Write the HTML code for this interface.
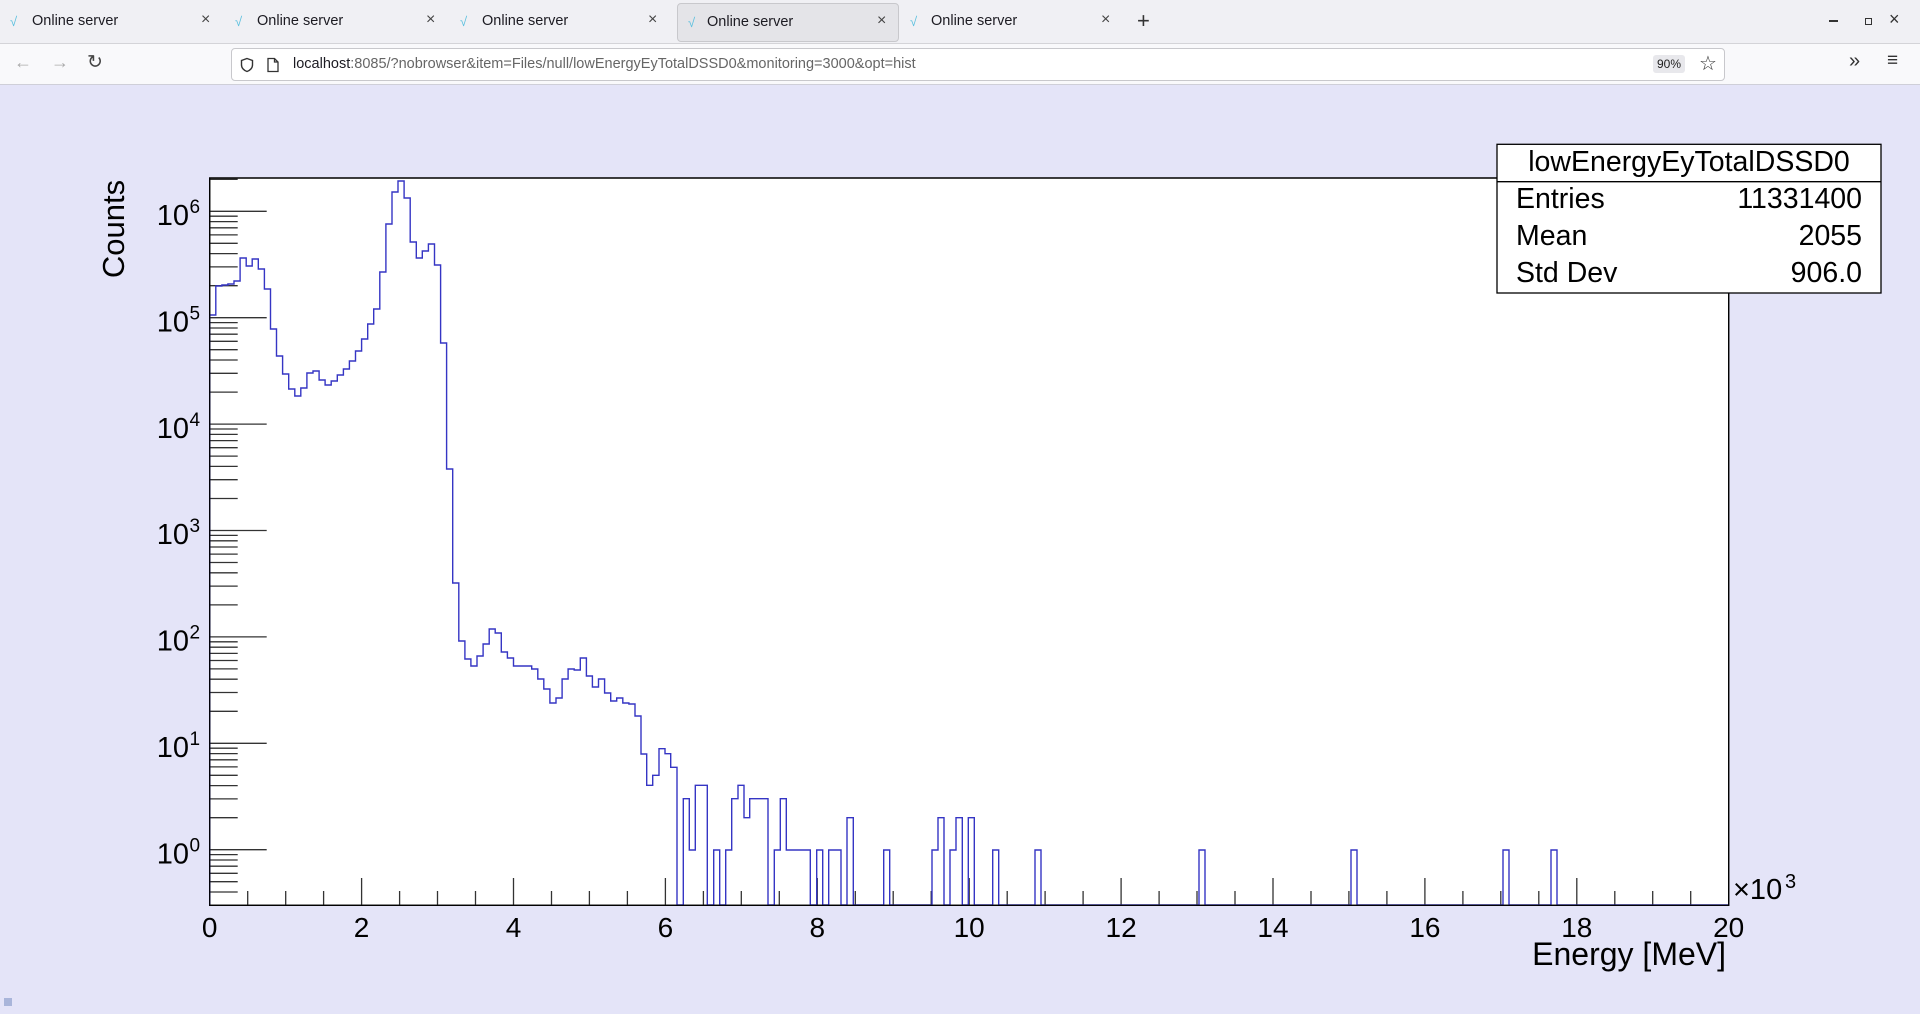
<!DOCTYPE html>
<html><head><meta charset="utf-8">
<style>
html,body{margin:0;padding:0;width:1920px;height:1014px;overflow:hidden;background:#e4e4f8;font-family:"Liberation Sans",sans-serif;}
#tabs{position:absolute;left:0;top:0;width:1920px;height:43px;background:#f0f0f4;border-bottom:1px solid #d4d4d8;}
.tab{position:absolute;top:3px;height:37px;width:220px;font-size:14.5px;color:#1c1b22;}
.tab .ic{position:absolute;left:10px;top:11px;font-size:13px;color:#5bc0de;}
.tab .t{position:absolute;left:22px;top:10px;}
.tab .x{position:absolute;top:8px;font-size:16px;color:#444;}
.tab.act{background:#e4e4e8;border:1px solid #c8c8cc;border-radius:4px;}
#nav{position:absolute;left:0;top:44px;width:1920px;height:40px;background:#f9f9fb;border-bottom:1px solid #cfcfd8;}
#url{position:absolute;left:231px;top:4px;width:1492px;height:31px;background:#fff;border:1px solid #c8c8cc;border-radius:4px;font-size:14.5px;}
.g{color:#666;}
</style></head><body>
<div id="tabs">
 <div class="tab" style="left:0"><span class="ic">√</span><span class="t" style="left:32px">Online server</span><span class="x" style="left:201px">×</span></div>
 <div class="tab" style="left:225px"><span class="ic">√</span><span class="t" style="left:32px">Online server</span><span class="x" style="left:201px">×</span></div>
 <div class="tab" style="left:450px"><span class="ic">√</span><span class="t" style="left:32px">Online server</span><span class="x" style="left:198px">×</span></div>
 <div class="tab act" style="left:677px;width:220px"><span class="ic">√</span><span class="t" style="left:29px">Online server</span><span class="x" style="left:199px">×</span></div>
 <div class="tab" style="left:900px"><span class="ic">√</span><span class="t" style="left:31px">Online server</span><span class="x" style="left:201px">×</span></div>
 <div style="position:absolute;left:1137px;top:8px;font-size:22px;color:#333">+</div>
 <div style="position:absolute;left:1829px;top:20px;width:9px;height:1.5px;background:#333"></div>
 <div style="position:absolute;left:1865px;top:18px;width:5px;height:5px;border:1.5px solid #333"></div>
 <div style="position:absolute;left:1889px;top:9px;font-size:18px;color:#333">×</div>
</div>
<div id="nav">
 <div style="position:absolute;left:14px;top:8px;font-size:18px;color:#aaa">←</div>
 <div style="position:absolute;left:51px;top:8px;font-size:18px;color:#aaa">→</div>
 <div style="position:absolute;left:87px;top:7px;font-size:19px;color:#444">↻</div>
 <div id="url">
  <svg style="position:absolute;left:7px;top:8px" width="16" height="16" viewBox="0 0 16 16"><path d="M8 1.5 L13.5 3.5 V8 C13.5 11 11 13.5 8 14.5 C5 13.5 2.5 11 2.5 8 V3.5 Z" fill="none" stroke="#333" stroke-width="1.4"/></svg>
  <svg style="position:absolute;left:34px;top:8px" width="14" height="16" viewBox="0 0 14 16"><path d="M2 1.5 H8.5 L12 5 V14.5 H2 Z M8.5 1.5 V5 H12" fill="none" stroke="#333" stroke-width="1.3"/></svg>
  <span style="position:absolute;left:61px;top:7px;color:#1c1b22">localhost<span class="g">:8085/?nobrowser&amp;item=Files/null/lowEnergyEyTotalDSSD0&amp;monitoring=3000&amp;opt=hist</span></span>
  <div style="position:absolute;left:1421px;top:6px;width:32px;height:18px;background:#e8e8ec;border-radius:3px;font-size:12px;text-align:center;line-height:18px;color:#222">90%</div>
  <div style="position:absolute;left:1467px;top:2px;font-size:20px;color:#333">☆</div>
 </div>
 <div style="position:absolute;left:1849px;top:6px;font-size:20px;color:#333">»</div>
 <div style="position:absolute;left:1887px;top:6px;font-size:19px;color:#333">≡</div>
</div>
<svg style="position:absolute;left:0;top:0" width="1920" height="1014" viewBox="0 0 1920 1014" font-family="Liberation Sans, sans-serif">
 <rect x="209.7" y="178" width="1519" height="727.3" fill="#fff" stroke="#000" stroke-width="1.3"/>
 <g stroke="#333" stroke-width="1.3">
  <path d="M209.7 849.7h57M209.7 743.3h57M209.7 636.9h57M209.7 530.5h57M209.7 424.1h57M209.7 317.7h57M209.7 211.3h57"/>
  <path d="M209.7 179.3h28
  M209.7 817.7h28M209.7 798.9h28M209.7 785.6h28M209.7 775.3h28M209.7 766.9h28M209.7 759.8h28M209.7 753.6h28M209.7 748.2h28
  M209.7 711.3h28M209.7 692.5h28M209.7 679.2h28M209.7 668.9h28M209.7 660.5h28M209.7 653.4h28M209.7 647.2h28M209.7 641.8h28
  M209.7 604.9h28M209.7 586.1h28M209.7 572.8h28M209.7 562.5h28M209.7 554.1h28M209.7 547h28M209.7 540.8h28M209.7 535.4h28
  M209.7 498.5h28M209.7 479.7h28M209.7 466.4h28M209.7 456.1h28M209.7 447.7h28M209.7 440.6h28M209.7 434.4h28M209.7 429h28
  M209.7 392.1h28M209.7 373.3h28M209.7 360h28M209.7 349.7h28M209.7 341.3h28M209.7 334.2h28M209.7 328h28M209.7 322.6h28
  M209.7 285.7h28M209.7 266.9h28M209.7 253.6h28M209.7 243.3h28M209.7 234.9h28M209.7 227.8h28M209.7 221.6h28M209.7 216.2h28
  M209.7 854.6h28M209.7 860h28M209.7 866.2h28M209.7 873.3h28M209.7 881.7h28M209.7 892h28"/>
  <path d="M361.6 905v-27M513.5 905v-27M665.4 905v-27M817.3 905v-27M969.2 905v-27M1121.1 905v-27M1273 905v-27M1424.9 905v-27M1576.8 905v-27"/>
  <path d="M247.7 905v-14M285.7 905v-14M323.6 905v-14M399.6 905v-14M437.5 905v-14M475.5 905v-14M551.5 905v-14M589.4 905v-14M627.4 905v-14M703.4 905v-14M741.3 905v-14M779.3 905v-14M855.3 905v-14M893.2 905v-14M931.2 905v-14M1007.2 905v-14M1045.1 905v-14M1083.1 905v-14M1159.1 905v-14M1197 905v-14M1235 905v-14M1311 905v-14M1348.9 905v-14M1386.9 905v-14M1462.9 905v-14M1500.8 905v-14M1538.8 905v-14M1614.8 905v-14M1652.7 905v-14M1690.7 905v-14"/>
 </g>
 <path fill="none" stroke="#3535c4" stroke-width="1.4" d="M209.7 905V315H215.8V286H221.9V285H227.9V284H234V281H240.1V258H246.2V266H252.2V259H258.3V269H264.4V289H270.5V329H276.5V356H282.6V374H288.7V389H294.8V396H300.8V388H306.9V373H313V371H319.1V380H325.1V385H331.2V381H337.3V375H343.4V369H349.4V361H355.5V351H361.6V339H367.7V324H373.7V309H379.8V272H385.9V224H392V192H398V181H404.1V198H410.2V242H416.3V258H422.3V251H428.4V244H434.5V265H440.6V343H446.6V469H452.7V583H458.8V641H464.9V659H470.9V666H477V656H483.1V644H489.2V629H495.2V633H501.3V652H507.4V658H513.5V666H525.6V666H531.7V669H537.8V679H543.8V689H549.9V703H556V698H562.1V679H568.1V669H574.2V670H580.3V658H586.4V676H592.4V687H598.5V679H604.6V693H610.7V701H616.7V698H622.8V703H628.9V704H635V716H641V754H646.7V785.3H652.7V775.3H659V748.7H665V753.7H670.7V767.3H677V905H683.3V798.7H689.3V850H695.3V785.3H707.3V905H713.7V850H719.7V905H725.7V850H731.7V798.7H738V785.3H744V817.7H749.7V798.7H768V905H774.3V850H780.3V798.7H786.3V850H810.3V905H816.7V850H822.7V905H828.7V850H841V905H847V817.7H853.3V905H883.7V850H889.7V905H932V850H938V817.7H944V905H950V850H956V817.7H962.3V905H968.3V817.7H974.3V905H992.7V850H998.7V905H1035V850H1041V905H1199V850H1205V905H1351V850H1357V905H1503V850H1509V905H1551V850H1557V905H1728"/>
 <rect x="209.7" y="178" width="1519" height="727.3" fill="none" stroke="#000" stroke-width="1.3"/>
 <g font-size="29" fill="#000" text-anchor="end">
  <text x="189" y="225">10</text>
  <text x="189" y="331.4">10</text><text x="189" y="437.8">10</text><text x="189" y="544.2">10</text><text x="189" y="650.6">10</text><text x="189" y="757">10</text><text x="189" y="863.4">10</text>
 </g>
 <g font-size="19" fill="#000">
  <text x="189.5" y="213">6</text><text x="189.5" y="319.4">5</text><text x="189.5" y="425.8">4</text><text x="189.5" y="532.2">3</text><text x="189.5" y="638.6">2</text><text x="189.5" y="745">1</text><text x="189.5" y="851.4">0</text>
 </g>
 <g font-size="28" fill="#000" text-anchor="middle">
  <text x="209.7" y="937">0</text><text x="361.6" y="937">2</text><text x="513.5" y="937">4</text><text x="665.4" y="937">6</text><text x="817.3" y="937">8</text><text x="969.2" y="937">10</text><text x="1121.1" y="937">12</text><text x="1273" y="937">14</text><text x="1424.9" y="937">16</text><text x="1576.8" y="937">18</text><text x="1728.7" y="937">20</text>
 </g>
 <text x="1733" y="899" font-size="29">×10</text><text x="1785" y="888" font-size="20">3</text>
 <text x="1726" y="965" font-size="32" text-anchor="end">Energy [MeV]</text>
 <text transform="translate(124,229) rotate(-90)" font-size="31" text-anchor="middle">Counts</text>
 <rect x="1497" y="144.3" width="384" height="148.7" fill="#fff" stroke="#000" stroke-width="1.3"/>
 <line x1="1497" y1="181.7" x2="1881" y2="181.7" stroke="#000" stroke-width="1.3"/>
 <g font-size="28.5" fill="#000">
  <text x="1689" y="171" text-anchor="middle">lowEnergyEyTotalDSSD0</text>
  <text x="1516" y="208">Entries</text><text x="1862" y="208" text-anchor="end">11331400</text>
  <text x="1516" y="245">Mean</text><text x="1862" y="245" text-anchor="end">2055</text>
  <text x="1516" y="282">Std Dev</text><text x="1862" y="282" text-anchor="end">906.0</text>
 </g>
 <rect x="4" y="998" width="8" height="8" fill="#a9b5da"/>
</svg>
</body></html>
